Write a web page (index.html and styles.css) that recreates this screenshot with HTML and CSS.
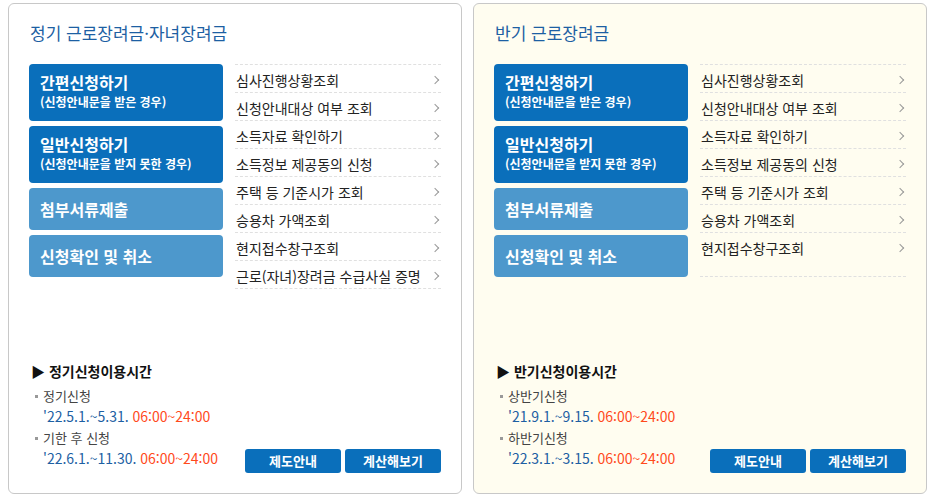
FILE: index.html
```html
<!DOCTYPE html>
<html lang="ko">
<head>
  <meta charset="UTF-8">
  <title>근로장려금 신청</title>
  <link rel="stylesheet" href="styles.css">
</head>
<body>

  <div class="wrap">

    <section class="panel">
      <h2 class="panel-title">정기 근로장려금·자녀장려금</h2>

      <div class="panel-body">
        <div class="apply-btns">
          <a class="apply-btn dark tall" href="#">
            <strong>간편신청하기</strong>
            <small>(신청안내문을 받은 경우)</small>
          </a>
          <a class="apply-btn dark tall" href="#">
            <strong>일반신청하기</strong>
            <small>(신청안내문을 받지 못한 경우)</small>
          </a>
          <a class="apply-btn light" href="#"><strong>첨부서류제출</strong></a>
          <a class="apply-btn light" href="#"><strong>신청확인 및 취소</strong></a>
        </div>

        <ul class="link-list">
          <li><a href="#">심사진행상황조회</a></li>
          <li><a href="#">신청안내대상 여부 조회</a></li>
          <li><a href="#">소득자료 확인하기</a></li>
          <li><a href="#">소득정보 제공동의 신청</a></li>
          <li><a href="#">주택 등 기준시가 조회</a></li>
          <li><a href="#">승용차 가액조회</a></li>
          <li><a href="#">현지접수창구조회</a></li>
          <li><a href="#">근로(자녀)장려금 수급사실 증명</a></li>
        </ul>
      </div>

      <div class="panel-foot">
        <div class="hours">
          <h3>▶ 정기신청이용시간</h3>
          <dl>
            <dt>정기신청</dt>
            <dd>'22.5.1.~5.31. <em>06:00~24:00</em></dd>
            <dt>기한 후 신청</dt>
            <dd>'22.6.1.~11.30. <em>06:00~24:00</em></dd>
          </dl>
        </div>
        <div class="foot-btns">
          <a class="foot-btn" href="#">제도안내</a>
          <a class="foot-btn" href="#">계산해보기</a>
        </div>
      </div>
    </section>

    <section class="panel cream">
      <h2 class="panel-title">반기 근로장려금</h2>

      <div class="panel-body">
        <div class="apply-btns">
          <a class="apply-btn dark tall" href="#">
            <strong>간편신청하기</strong>
            <small>(신청안내문을 받은 경우)</small>
          </a>
          <a class="apply-btn dark tall" href="#">
            <strong>일반신청하기</strong>
            <small>(신청안내문을 받지 못한 경우)</small>
          </a>
          <a class="apply-btn light" href="#"><strong>첨부서류제출</strong></a>
          <a class="apply-btn light" href="#"><strong>신청확인 및 취소</strong></a>
        </div>

        <ul class="link-list">
          <li><a href="#">심사진행상황조회</a></li>
          <li><a href="#">신청안내대상 여부 조회</a></li>
          <li><a href="#">소득자료 확인하기</a></li>
          <li><a href="#">소득정보 제공동의 신청</a></li>
          <li><a href="#">주택 등 기준시가 조회</a></li>
          <li><a href="#">승용차 가액조회</a></li>
          <li><a href="#">현지접수창구조회</a></li>
        </ul>
      </div>

      <div class="panel-foot">
        <div class="hours">
          <h3>▶ 반기신청이용시간</h3>
          <dl>
            <dt>상반기신청</dt>
            <dd>'21.9.1.~9.15. <em>06:00~24:00</em></dd>
            <dt>하반기신청</dt>
            <dd>'22.3.1.~3.15. <em>06:00~24:00</em></dd>
          </dl>
        </div>
        <div class="foot-btns">
          <a class="foot-btn" href="#">제도안내</a>
          <a class="foot-btn" href="#">계산해보기</a>
        </div>
      </div>
    </section>

  </div>

</body>
</html>
```

FILE: styles.css
```css
* {
  box-sizing: border-box;
}

body {
  margin: 0;
  font-family: "Noto Sans CJK KR", "Noto Sans", sans-serif;
  color: #222;
  background: #fff;
}

a {
  text-decoration: none;
  color: inherit;
}

.wrap {
  display: flex;
  gap: 11px;
  padding: 3px 0 0 8px;
}

.panel {
  width: 454px;
  height: 491px;
  border: 1px solid #c8c8c8;
  border-radius: 6px;
  padding: 18px 20px 20px;
  display: flex;
  flex-direction: column;
  background: #fff;
}

.panel.cream {
  background: #fffdf0;
}

.panel-title {
  margin: 0 0 20px 1px;
  font-size: 17px;
  line-height: 22px;
  font-weight: normal;
  color: #1d5fa3;
}

.panel-body {
  display: flex;
  gap: 12px;
}

.apply-btns {
  width: 194px;
  display: flex;
  flex-direction: column;
  gap: 5px;
}

.apply-btn {
  display: flex;
  flex-direction: column;
  justify-content: center;
  height: 42px;
  padding: 0 11px;
  border-radius: 4px;
  color: #fff;
}

.apply-btn strong {
  font-size: 16px;
  line-height: 19px;
}

.apply-btn small {
  margin-top: 2px;
  font-size: 12px;
  line-height: 15px;
  font-weight: bold;
}

.apply-btn.tall {
  height: 57px;
  justify-content: flex-start;
  padding-top: 9px;
}

.apply-btn.dark {
  background: #0a6fbb;
}

.apply-btn.light {
  background: #4d98cc;
}

.link-list {
  list-style: none;
  margin: 0;
  padding: 0;
  width: 206px;
  border-bottom: 1px dashed #e0e0e0;
}

.link-list li {
  border-top: 1px dashed #e0e0e0;
}

.link-list a {
  display: flex;
  justify-content: space-between;
  align-items: center;
  height: 27px;
  padding: 2px 0 0 1px;
  font-size: 14px;
  color: #222;
}

.link-list a::after {
  content: "";
  width: 5px;
  height: 5px;
  margin-right: 3px;
  border-top: 1px solid #999;
  border-right: 1px solid #999;
  transform: rotate(45deg);
}

.panel-foot {
  margin-top: auto;
  display: flex;
  justify-content: space-between;
  align-items: flex-end;
}

.hours {
  padding: 0 0 3px 2px;
}

.hours h3 {
  margin: 0 0 5px;
  font-size: 14px;
  line-height: 20px;
  color: #111;
}

.hours dl {
  margin: 0;
}

.hours dt {
  position: relative;
  padding-left: 12px;
  font-size: 13px;
  line-height: 20px;
  color: #444;
}

.hours dt::before {
  content: "";
  position: absolute;
  left: 4px;
  top: 9px;
  width: 3px;
  height: 3px;
  background: #999;
}

.hours dd {
  margin: 0 0 2px 12px;
  font-size: 14px;
  line-height: 20px;
  color: #1d5fa3;
}

.hours dd em {
  font-style: normal;
  color: #ff4a1c;
}

.foot-btns {
  display: flex;
  gap: 4px;
}

.foot-btn {
  width: 96px;
  height: 24px;
  line-height: 24px;
  text-align: center;
  background: #0a6fbb;
  color: #fff;
  font-size: 13px;
  font-weight: bold;
  border-radius: 3px;
}
```
